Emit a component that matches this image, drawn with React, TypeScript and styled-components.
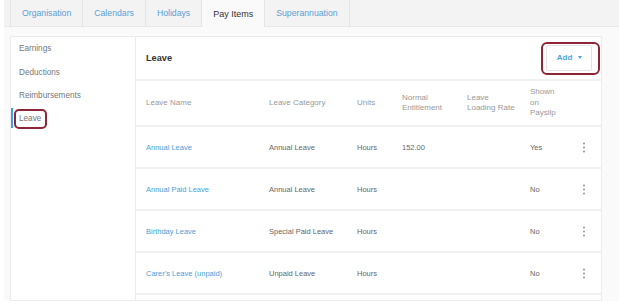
import React from "react";
import styled, { createGlobalStyle } from "styled-components";

const GlobalStyle = createGlobalStyle`
  html, body {
    margin: 0;
    padding: 0;
    background: #fff;
    font-family: "Liberation Sans", Arial, sans-serif;
  }
`;

const Frame = styled.div`
  margin-left: 4px;
  width: 615px;
  height: 301px;
  background: #fafafa;
  overflow: hidden;
`;

const TabBar = styled.div`
  display: flex;
  height: 26px;
  padding-left: 6px;
  background: #f3f3f3;
  border-bottom: 1px solid #e8e8e8;
`;

const Tab = styled.div<{ $active?: boolean }>`
  display: flex;
  align-items: center;
  padding: 0 11px;
  font-size: ${(p) => (p.$active ? "9px" : "8.7px")};
  color: ${(p) => (p.$active ? "#333" : "#5aa0d6")};
  background: ${(p) => (p.$active ? "#fafafa" : "transparent")};
  border-left: 1px solid #e4e4e4;
  margin-bottom: ${(p) => (p.$active ? "-1px" : "0")};
  height: ${(p) => (p.$active ? "27px" : "26px")};
  &:last-child {
    border-right: 1px solid #e4e4e4;
  }
`;

const Body = styled.div`
  display: flex;
  padding: 9px 17px 0 6px;
  height: 265px;
`;

const Sidebar = styled.div`
  width: 124px;
  background: #fff;
  border: 1px solid #ececec;
  border-right: none;
  display: flex;
  flex-direction: column;
`;

const SideItem = styled.div<{ $active?: boolean }>`
  height: 23.4px;
  display: flex;
  align-items: center;
  padding-left: 8px;
  font-size: 8.2px;
  color: #777;
  position: relative;
  &::before {
    content: "";
    display: ${(p) => (p.$active ? "block" : "none")};
    position: absolute;
    left: 0;
    top: 1px;
    width: 2px;
    height: 20px;
    background: #3d9ee0;
  }
`;

const Marker = styled.span`
  display: inline-block;
  border: 2px solid #8e2536;
  border-radius: 5px;
  padding: 3px 4px 4px 3px;
  margin-left: -5px;
`;

const Panel = styled.div`
  flex: 1;
  background: #fff;
  border: 1px solid #ececec;
  display: flex;
  flex-direction: column;
`;

const PanelHeader = styled.div`
  height: 42px;
  display: flex;
  align-items: center;
  justify-content: space-between;
  padding: 0 1px 0 10px;
  border-bottom: 2px solid #f1f1f1;
`;

const Title = styled.div`
  font-size: 9.2px;
  font-weight: bold;
  color: #333;
`;

const AddOutline = styled.span`
  display: inline-flex;
  border: 2px solid #8e2536;
  border-radius: 6px;
  padding: 1px 6px 2px 3px;
`;

const AddButton = styled.button`
  width: 46px;
  height: 26px;
  display: flex;
  align-items: center;
  justify-content: center;
  gap: 6px;
  background: #fff;
  border: 1px solid #e3e3e3;
  border-radius: 2px;
  font-family: inherit;
  font-size: 8px;
  font-weight: bold;
  color: #4aa3e0;
  padding: 0 0 0 1px;
`;

const Caret = styled.span`
  width: 0;
  height: 0;
  border-left: 2.5px solid transparent;
  border-right: 2.5px solid transparent;
  border-top: 3px solid #4aa3e0;
`;

const Row = styled.div<{ $head?: boolean }>`
  display: grid;
  grid-template-columns: 123px 88px 45px 65px 63px 52px 1fr;
  align-items: center;
  height: ${(p) => (p.$head ? "44px" : "40px")};
  padding-left: 10px;
  border-bottom: 2px solid #f1f1f1;
  flex-shrink: 0;
`;

const HeadCell = styled.div`
  font-size: 8px;
  line-height: 10.5px;
  color: #999;
`;

const Cell = styled.div<{ $link?: boolean }>`
  font-size: 7.5px;
  color: ${(p) => (p.$link ? "#4a9fd8" : "#666")};
  white-space: nowrap;
`;

const Kebab = () => (
  <svg width="4" height="11" viewBox="0 0 4 11">
    <circle cx="2" cy="1.5" r="0.9" fill="#888" />
    <circle cx="2" cy="5.5" r="0.9" fill="#888" />
    <circle cx="2" cy="9.5" r="0.9" fill="#888" />
  </svg>
);

const tabs = ["Organisation", "Calendars", "Holidays", "Pay Items", "Superannuation"];
const sideItems = ["Earnings", "Deductions", "Reimbursements", "Leave"];

const rows = [
  { name: "Annual Leave", category: "Annual Leave", units: "Hours", normal: "152.00", shown: "Yes" },
  { name: "Annual Paid Leave", category: "Annual Leave", units: "Hours", normal: "", shown: "No" },
  { name: "Birthday Leave", category: "Special Paid Leave", units: "Hours", normal: "", shown: "No" },
  { name: "Carer's Leave (unpaid)", category: "Unpaid Leave", units: "Hours", normal: "", shown: "No" },
];

export default function App() {
  return (
    <>
      <GlobalStyle />
      <Frame>
        <TabBar>
          {tabs.map((t) => (
            <Tab key={t} $active={t === "Pay Items"}>
              {t}
            </Tab>
          ))}
        </TabBar>
        <Body>
          <Sidebar>
            {sideItems.map((s) => (
              <SideItem key={s} $active={s === "Leave"}>
                {s === "Leave" ? <Marker>{s}</Marker> : s}
              </SideItem>
            ))}
          </Sidebar>
          <Panel>
            <PanelHeader>
              <Title>Leave</Title>
              <AddOutline>
                <AddButton>
                  Add <Caret />
                </AddButton>
              </AddOutline>
            </PanelHeader>
            <Row $head>
              <HeadCell>Leave Name</HeadCell>
              <HeadCell>Leave Category</HeadCell>
              <HeadCell>Units</HeadCell>
              <HeadCell>
                Normal
                <br />
                Entitlement
              </HeadCell>
              <HeadCell>
                Leave
                <br />
                Loading Rate
              </HeadCell>
              <HeadCell>
                Shown
                <br />
                on
                <br />
                Payslip
              </HeadCell>
              <div />
            </Row>
            {rows.map((r) => (
              <Row key={r.name}>
                <Cell $link>{r.name}</Cell>
                <Cell>{r.category}</Cell>
                <Cell>{r.units}</Cell>
                <Cell>{r.normal}</Cell>
                <Cell />
                <Cell>{r.shown}</Cell>
                <Kebab />
              </Row>
            ))}
          </Panel>
        </Body>
      </Frame>
    </>
  );
}
